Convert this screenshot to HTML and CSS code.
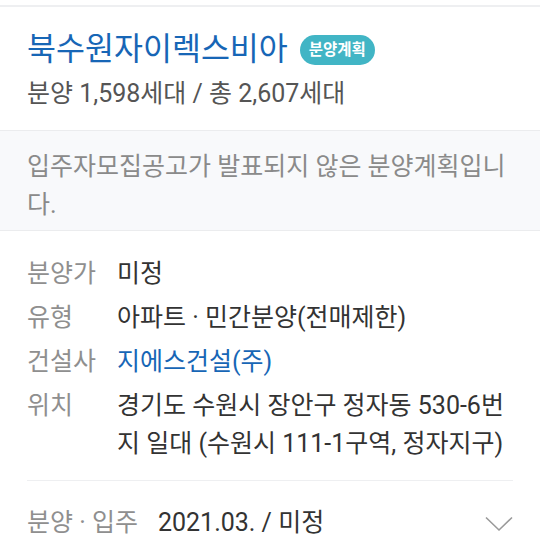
FILE: index.html
```html
<!DOCTYPE html>
<html lang="ko">
<head>
<meta charset="utf-8">
<link rel="stylesheet" href="styles.css">
</head>
<body>
<div class="page">
  <div class="topgap"></div>
  <section class="head">
    <div class="title-row">
      <h1 class="title">북수원자이렉스비아</h1>
      <span class="badge">분양계획</span>
    </div>
    <p class="units">분양 1,598세대 / 총 2,607세대</p>
  </section>
  <section class="notice">
    <p>입주자모집공고가 발표되지 않은 분양계획입니다.</p>
  </section>
  <section class="info">
    <div class="row"><span class="label">분양가</span><span class="value">미정</span></div>
    <div class="row"><span class="label">유형</span><span class="value">아파트 · 민간분양(전매제한)</span></div>
    <div class="row"><span class="label">건설사</span><span class="value link">지에스건설(주)</span></div>
    <div class="row"><span class="label">위치</span><span class="value">경기도 수원시 장안구 정자동 530-6번지 일대 (수원시 111-1구역, 정자지구)</span></div>
  </section>
  <section class="schedule">
    <span class="label">분양 · 입주</span>
    <span class="value">2021.03. / 미정</span>
    <svg class="chev" width="28" height="16" viewBox="0 0 28 16"><path d="M1 1.5 L14 14 L27 1.5" fill="none" stroke="#9a9a9a" stroke-width="1.6"/></svg>
  </section>
</div>
</body>
</html>
```

FILE: styles.css
```css
* { box-sizing: border-box; margin: 0; padding: 0; }
html, body { background: #fff; }
body {
  margin: 0;
  font-family: Roboto, "Noto Sans CJK KR", "Noto Sans", sans-serif;
  color: #333;
  width: 540px;
  overflow: hidden;
}
.topgap { height: 7px; border-bottom: 2px solid #eeeff1; }
.head {
  padding: 23px 27px 18px;
  border-bottom: 1px solid #ebecee;
}
.title-row { display: flex; align-items: center; gap: 12px; }
.title {
  font-size: 31.5px;
  font-weight: 400;
  line-height: 40px;
  color: #1766b6;
}
.badge {
  display: inline-flex;
  align-items: center;
  height: 30px;
  padding: 0 9px;
  border-radius: 15px;
  background: #41b5c5;
  color: #fff;
  font-size: 15.5px;
  font-weight: 700;
  line-height: 30px;
}
.units {
  margin-top: 6px;
  font-size: 25px;
  line-height: 36px;
  color: #555;
}
.notice {
  background: #f8f9fb;
  padding: 17px 27px 6px;
  border-bottom: 1px solid #ebecee;
}
.notice p {
  font-size: 25px;
  line-height: 38px;
  color: #8a8a8a;
}
.info {
  margin: 0 27px;
  padding: 24px 0 17px;
  border-bottom: 1px solid #eeeff1;
  display: flex;
  flex-direction: column;
  gap: 6px;
}
.row { display: flex; font-size: 25px; line-height: 38px; }
.label { color: #8f8f8f; flex: none; }
.row .label { width: 90px; }
.value { color: #333; }
.link { color: #1766b6; }
.schedule {
  margin: 0 27px;
  padding: 23px 0;
  display: flex;
  align-items: center;
  font-size: 25px;
  line-height: 38px;
}
.schedule .value { margin-left: 20px; flex: 1; }
.chev { flex: none; margin-top: 1px; }
```
